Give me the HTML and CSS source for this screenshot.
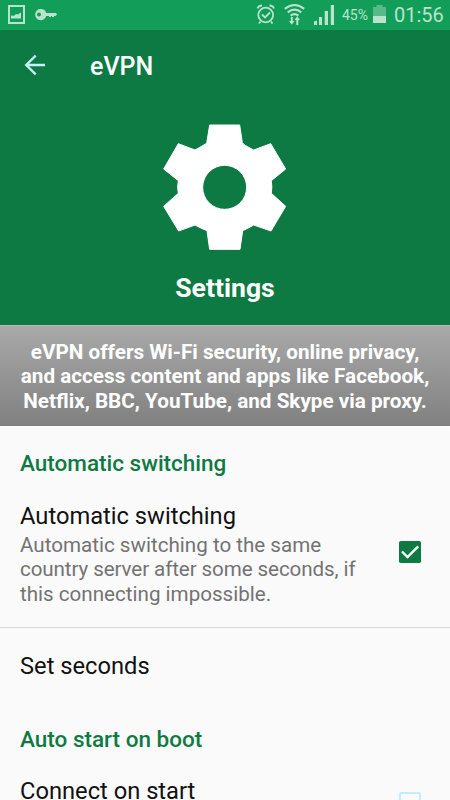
FILE: index.html
```html
<!DOCTYPE html>
<html lang="en">
<head>
<meta charset="utf-8">
<meta name="viewport" content="width=device-width">
<title>eVPN</title>
<link rel="stylesheet" href="styles.css">
</head>
<body>
<div class="screen">
  <div class="status">
    <svg class="notices" width="60" height="30" viewBox="0 0 60 30">
      <rect x="9" y="6" width="15" height="17" fill="none" stroke="currentColor" stroke-width="2"/>
      <path d="M11 18.500v-3l3 .2 2-1.700 1.500.5 3.500-2v6z" fill="currentColor"/>
      <path fill="currentColor" fill-rule="evenodd" d="M41 9a5.600 5.600 0 0 1 5.200 4H56l1 1.500L55.500 16H54v1h-2v-1h-1v1h-2v-1h-2.800A5.600 5.600 0 1 1 41 9zm-2 3.600a2 2 0 1 0 0 4 2 2 0 0 0 0-4z"/>
    </svg>
    <div class="indicators">
      <svg width="80" height="30" viewBox="256 0 80 30" fill="none" stroke="currentColor">
        <circle cx="265.700" cy="15" r="7.400" stroke-width="1.800"/>
        <path stroke-width="1.800" d="M257.500 8.500q1-3 4.500-3M269.500 5.500q3.500 0 4.500 3M260.500 21.500l-1.500 2M271 21.500l1.500 2"/>
        <path stroke-width="1.800" d="M262 14.500l3 3 5-5"/>
        <path stroke-width="2.100" d="M284.800 8.800q9.700-7.600 19.400 0M287.700 12.300q6.800-5.200 13.600 0M290.600 15.600q3.900-3 7.800 0"/>
        <path fill="currentColor" stroke="none" d="M289 21h1.800v-4h2v4h1.700l-2.800 3.800zM294.500 20l2.700-3.800L300 20h-1.700v5h-2v-5z"/>
        <path fill="currentColor" stroke="none" d="M314 21.500l3-1V25h-3zM319 17h3v8h-3zM324.700 11h3.300v14h-3.300zM330.800 5h3.200v20h-3.200z"/>
      </svg>
      <span class="percent">45%</span>
      <svg class="battery" width="13" height="30" viewBox="0 0 13 30" fill="currentColor">
        <path opacity=".42" d="M0 7h3.500V5h6v2H13v9H0z"/>
        <path d="M0 16h13v7H0z"/>
      </svg>
      <span class="clock">01:56</span>
    </div>
  </div>
  <header class="hero">
    <div class="toolbar">
      <svg class="back" width="22" height="22" viewBox="0 0 22 22" fill="none" stroke="currentColor" stroke-width="2.300">
        <path d="M21 11H2.500M11.700 1.600L2.200 11l9.500 9.400"/>
      </svg>
      <h1 class="app-title">eVPN</h1>
    </div>
    <svg class="gear" width="124" height="126" viewBox="40 42 372 378">
      <path fill="#fff" stroke="#fff" stroke-width="3" stroke-linejoin="round" fill-rule="evenodd" d="M180 45H270L278 98Q280 104 312 120L363 101L408 177L365 212Q368 231 365 250L408 289L364 363L312 345Q290 358 279 362L271 418H180L172 362Q160 358 136 345L87 363L42 289L86 250Q82 231 86 212L42 177L86 101L136 120Q158 108 171 100ZM225 166A66 66 0 1 0 225 298A66 66 0 1 0 225 166Z"/>
    </svg>
    <h2 class="hero-title">Settings</h2>
  </header>
  <p class="intro"><span class="line">eVPN offers Wi-Fi security, online privacy,</span><span class="line">and access content and apps like Facebook,</span><span class="line">Netflix, BBC, YouTube, and Skype via proxy.</span></p>
  <main>
    <h3 class="section first">Automatic switching</h3>
    <div class="item switching">
      <div class="copy">
        <div class="name">Automatic switching</div>
        <div class="summary"><span class="line">Automatic switching to the same</span><span class="line tight">country server after some seconds, if</span><span class="line">this connecting impossible.</span></div>
      </div>
      <svg class="check" width="22" height="22" viewBox="0 0 22 22">
        <rect width="22" height="22" rx="1.800" fill="#0e7a43"/>
        <path d="M3 10.500l5.500 5.500L19.200 5.300" fill="none" stroke="#fff" stroke-width="2.400"/>
      </svg>
    </div>
    <div class="item seconds"><div class="name">Set seconds</div></div>
    <h3 class="section boot">Auto start on boot</h3>
    <div class="item start">
      <div class="name">Connect on start</div>
      <span class="unchecked"></span>
    </div>
  </main>
</div>
</body>
</html>
```
FILE: styles.css
```css
* { box-sizing: border-box; margin: 0; }
body { font-family: Roboto, sans-serif; background: #fafafa; overflow: hidden; }
.screen { width: 450px; height: 800px; overflow: hidden; }
svg { display: block; flex: none; }
.status { height: 30px; background: #129e59; color: #b9e3cb; display: flex; justify-content: space-between; }
.indicators { display: flex; align-items: center; padding-right: 7px; white-space: nowrap; }
.percent { font-size: 14px; width: 37px; padding-left: 6px; }
.clock { font-size: 20px; line-height: 30px; width: 49px; margin-left: 8px; }
.hero { height: 295px; background: #0e7a43; color: #fff; display: flex; flex-direction: column; align-items: center; }
.toolbar { width: 100%; height: 70px; display: flex; align-items: center; padding-left: 24px; }
.back { color: #c5f0f8; }
.app-title { font-size: 25px; font-weight: 500; line-height: 30px; margin: 4px 0 0 44px; }
.gear { margin-top: 24px; }
.hero-title { font-size: 26.600px; font-weight: 700; line-height: 30px; margin-top: 23px; }
.intro { height: 101px; padding-top: 14px; background: linear-gradient(#a9a9a9, #808080); border-top: 1px solid #b8b8b8; color: #fff; font-size: 20.700px; font-weight: 700; line-height: 24.300px; text-align: center; }
.line { display: block; white-space: nowrap; }
.tight { letter-spacing: -.1px; }
.section { color: #0e7a43; font-size: 22.500px; font-weight: 500; line-height: 26px; padding-left: 20px; }
.first { margin-top: 24px; }
.item { padding: 0 29px 0 20px; display: flex; justify-content: space-between; }
.name { color: #111; font-size: 23.700px; line-height: 28px; white-space: nowrap; }
.switching { height: 152px; padding-top: 26px; border-bottom: 1px solid #d5d5d5; }
.summary { color: #737373; font-size: 20.600px; line-height: 24.300px; margin-top: 3px; }
.check { margin-top: 39px; }
.seconds { padding-top: 24px; height: 98px; }
.start { padding-top: 25px; }
.unchecked { width: 22px; height: 22px; margin-top: 15px; border: 2px solid #c3ecff; border-radius: 2px; }
```
